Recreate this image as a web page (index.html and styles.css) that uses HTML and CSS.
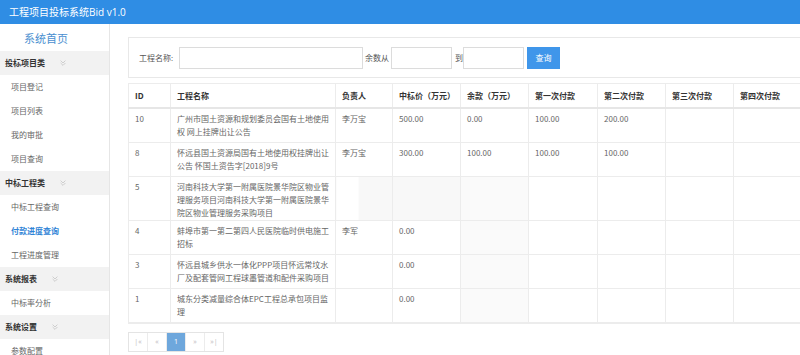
FILE: index.html
```html
<!DOCTYPE html>
<html lang="zh-CN">
<head>
    <meta charset="UTF-8">
    <title>工程项目投标系统Bid v1.0</title>
    <link rel="stylesheet" href="styles.css">
</head>
<body>
    <div class="topbar">工程项目投标系统Bid v1.0</div>

    <div class="layout">
        <div class="sidebar">
            <div class="home">系统首页</div>

            <div class="group">投标项目类 <svg class="chev" viewBox="0 0 10 10"><path d="M2 2 L5 5 L8 2 M2 5 L5 8 L8 5" /></svg></div>
            <div class="item">项目登记</div>
            <div class="item">项目列表</div>
            <div class="item">我的审批</div>
            <div class="item">项目查询</div>

            <div class="group">中标工程类 <svg class="chev" viewBox="0 0 10 10"><path d="M2 2 L5 5 L8 2 M2 5 L5 8 L8 5" /></svg></div>
            <div class="item">中标工程查询</div>
            <div class="item active">付款进度查询</div>
            <div class="item">工程进度管理</div>

            <div class="group">系统报表 <svg class="chev" viewBox="0 0 10 10"><path d="M2 2 L5 5 L8 2 M2 5 L5 8 L8 5" /></svg></div>
            <div class="item">中标率分析</div>

            <div class="group">系统设置 <svg class="chev" viewBox="0 0 10 10"><path d="M2 2 L5 5 L8 2 M2 5 L5 8 L8 5" /></svg></div>
            <div class="item">参数配置</div>
        </div>

        <div class="main">
            <div class="search">
                <label>工程名称:</label>
                <input type="text" class="name-input">
                <label class="from">余数从</label>
                <input type="text" class="num-input">
                <label class="to">到</label>
                <input type="text" class="num-input">
                <button>查询</button>
            </div>

            <table class="grid">
                <colgroup>
                    <col style="width:42px">
                    <col style="width:165px">
                    <col style="width:57px">
                    <col style="width:68px">
                    <col style="width:68px">
                    <col style="width:69px">
                    <col style="width:68px">
                    <col style="width:68px">
                    <col style="width:68px">
                </colgroup>
                <thead>
                    <tr>
                        <th>ID</th>
                        <th>工程名称</th>
                        <th>负责人</th>
                        <th>中标价（万元）</th>
                        <th>余款（万元）</th>
                        <th>第一次付款</th>
                        <th>第二次付款</th>
                        <th>第三次付款</th>
                        <th>第四次付款</th>
                    </tr>
                </thead>
                <tbody>
                    <tr>
                        <td>10</td>
                        <td>广州市国土资源和规划委员会国有土地使用权 网上挂牌出让公告</td>
                        <td>李万宝</td>
                        <td>500.00</td>
                        <td>0.00</td>
                        <td>100.00</td>
                        <td>200.00</td>
                        <td></td>
                        <td></td>
                    </tr>
                    <tr>
                        <td>8</td>
                        <td>怀远县国土资源局国有土地使用权挂牌出让公告 怀国土资告字[2018]9号</td>
                        <td>李万宝</td>
                        <td>300.00</td>
                        <td>100.00</td>
                        <td>100.00</td>
                        <td>100.00</td>
                        <td></td>
                        <td></td>
                    </tr>
                    <tr>
                        <td>5</td>
                        <td>河南科技大学第一附属医院景华院区物业管理服务项目河南科技大学第一附属医院景华院区物业管理服务采购项目</td>
                        <td class="ghost-l"></td>
                        <td class="ghost"></td>
                        <td class="shade"></td>
                        <td></td>
                        <td></td>
                        <td></td>
                        <td></td>
                    </tr>
                    <tr>
                        <td>4</td>
                        <td>蚌埠市第一第二第四人民医院临时供电施工招标</td>
                        <td>李军</td>
                        <td>0.00</td>
                        <td class="shade"></td>
                        <td></td>
                        <td></td>
                        <td></td>
                        <td></td>
                    </tr>
                    <tr>
                        <td>3</td>
                        <td>怀远县城乡供水一体化PPP项目怀远常坟水厂及配套管网工程球墨管道和配件采购项目</td>
                        <td></td>
                        <td>0.00</td>
                        <td class="shade"></td>
                        <td></td>
                        <td></td>
                        <td></td>
                        <td></td>
                    </tr>
                    <tr>
                        <td>1</td>
                        <td>城东分类减量综合体EPC工程总承包项目监理</td>
                        <td></td>
                        <td>0.00</td>
                        <td class="shade"></td>
                        <td></td>
                        <td></td>
                        <td></td>
                        <td></td>
                    </tr>
                </tbody>
            </table>

            <div class="pager">
                <span>|&laquo;</span>
                <span>&laquo;</span>
                <span class="current">1</span>
                <span>&raquo;</span>
                <span>&raquo;|</span>
            </div>
        </div>
    </div>
</body>
</html>
```

FILE: styles.css
```css
body {
    margin: 0;
    font-family: "Open Sans", "Noto Sans CJK SC", sans-serif;
    background-color: #fff;
    color: #555;
    overflow: hidden;
}
.topbar {
    height: 24px;
    line-height: 24px;
    padding-left: 9px;
    background-color: #2f8de4;
    color: #fff;
    font-size: 10px;
}
.layout {
    display: flex;
}
.sidebar {
    width: 109px;
    flex-shrink: 0;
    border-right: 1px solid #e6e6e6;
    height: 331px;
}
.home {
    height: 27px;
    line-height: 29px;
    padding-left: 24px;
    font-size: 11px;
    color: #4a8fd0;
}
.group {
    height: 24px;
    line-height: 24px;
    padding-left: 5px;
    background-color: #f2f2f2;
    font-size: 8px;
    font-weight: bold;
    color: #333;
    display: flex;
    align-items: center;
}
.chev {
    width: 8px;
    height: 8px;
    margin-left: 14px;
    fill: none;
    stroke: #c4c4c4;
    stroke-width: 1;
}
.item {
    height: 24px;
    line-height: 24px;
    padding-left: 11px;
    font-size: 8px;
    color: #666;
}
.item.active {
    color: #2f83d6;
    font-weight: bold;
}
.main {
    flex: 1;
    padding: 13px 0 0 18px;
    overflow: hidden;
}
.search {
    width: 700px;
    height: 39px;
    border: 1px solid #e8e8e8;
    display: flex;
    align-items: center;
    padding-left: 10px;
    font-size: 8px;
    color: #555;
}
.search input {
    box-sizing: border-box;
    height: 22px;
    padding: 0;
    border: 1px solid #dcdcdc;
    margin: 0;
}
.search input.name-input {
    width: 184px;
    margin-left: 6px;
}
.num-input {
    width: 61px;
}
.from {
    margin: 0 2px 0 2px;
}
.to {
    margin: 0 0 0 3px;
    width: 8px;
}
.search button {
    margin-left: 3px;
    width: 33px;
    height: 22px;
    border: none;
    background-color: #3f96ea;
    color: #fff;
    font-size: 8px;
    font-family: inherit;
    padding: 0;
}
.grid {
    margin-top: 5px;
    border-collapse: collapse;
    table-layout: fixed;
    width: 673px;
    font-size: 8px;
}
.grid th {
    height: 23px;
    text-align: left;
    padding: 0 6px;
    color: #333;
    font-weight: bold;
    border: 1px solid #ececec;
    border-bottom: 2px solid #e6e6e6;
}
.grid td {
    font-family: "Noto Sans CJK SC", "Open Sans", sans-serif;
    height: 29px;
    padding: 3px 6px 1px 6px;
    line-height: 13px;
    vertical-align: top;
    color: #666;
    border: 1px solid #ececec;
}
.grid tbody tr:last-child td {
    border-bottom: 2px solid #ececec;
}
.grid td.shade {
    background-color: #fafafa;
}
.grid td.ghost {
    background-color: #f8f8f8;
}
.grid td.ghost-l {
    background-image: linear-gradient(to right, #fff 40%, #f8f8f8 40%);
}
.pager {
    margin-top: 8px;
    display: flex;
    width: 94px;
    border: 1px solid #e4e4e4;
}
.pager span {
    width: 18px;
    height: 18px;
    line-height: 18px;
    text-align: center;
    font-size: 7px;
    color: #bbb;
    border-right: 1px solid #ececec;
}
.pager span:last-child {
    border-right: none;
}
.pager span.current {
    background-color: #6ea7dc;
    color: #fff;
}
```
